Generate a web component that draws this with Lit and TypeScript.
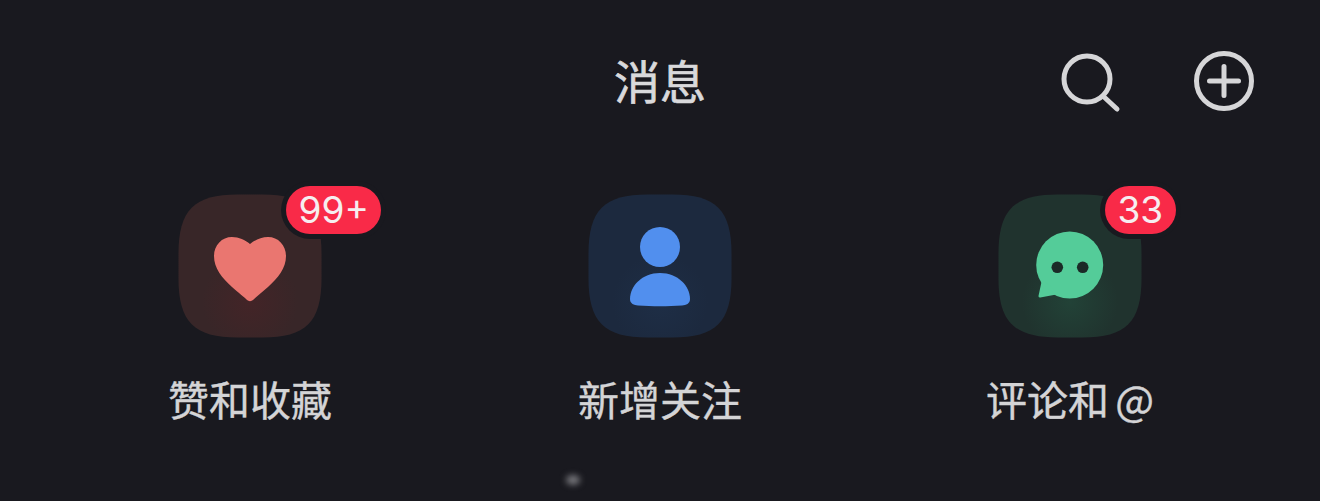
import { LitElement, html, svg, css } from "lit";
import { customElement } from "lit/decorators.js";

const FONT = css`"Noto Sans CJK SC", "Noto Sans", sans-serif`;

@customElement("app-root")
export class AppRoot extends LitElement {
  static styles = css`
    :host {
      display: block;
      position: relative;
      height: 501px;
      overflow: hidden;
      background: #19191f;
      font-family: ${FONT};
    }
    .header {
      display: grid;
      grid-template-columns: 1fr auto 1fr;
      align-items: center;
      height: 164px;
      padding-right: 66px;
      padding-left: 66px;
      box-sizing: border-box;
    }
    .title {
      font-size: 46px;
      font-weight: 400;
      line-height: 60px;
      color: #d9d9db;
      margin-top: -6px;
      -webkit-text-stroke: 0.7px #d9d9db;
    }
    .actions {
      grid-column: 3;
      display: flex;
      justify-content: flex-end;
      gap: 74px;
    }
    .actions svg {
      display: block;
      width: 60px;
      height: 60px;
      overflow: visible;
      fill: none;
      stroke: #d6d6d8;
      stroke-width: 5;
      stroke-linecap: round;
    }
    .grid {
      display: grid;
      grid-template-columns: repeat(3, 410px);
      padding: 30px 45px 0;
    }
    .item {
      display: flex;
      flex-direction: column;
      align-items: center;
    }
    .tile {
      position: relative;
      width: 144px;
      height: 144px;
    }
    .tile > svg {
      display: block;
      width: 144px;
      height: 144px;
    }
    .badge {
      position: absolute;
      top: -8px;
      left: 108px;
      height: 48px;
      padding: 0 12.5px;
      border-radius: 24px;
      background: #f92a48;
      box-shadow: 0 0 0 5px #19191f;
      color: #f6eef0;
      font-family: Inter, "Liberation Sans", sans-serif;
      font-size: 37px;
      line-height: 48px;
      white-space: nowrap;
    }
    .badge.green {
      left: 107px;
    }
    .label {
      margin-top: 35px;
      font-size: 41px;
      line-height: 50px;
      color: #d4d4d6;
      white-space: nowrap;
      word-spacing: -3px;
      -webkit-text-stroke: 0.4px #d4d4d6;
    }
    .smudge {
      position: absolute;
      left: 566px;
      top: 475px;
      width: 14px;
      height: 10px;
      border-radius: 50%;
      background: #77777c;
      filter: blur(3px);
    }
  `;

  private squircle(id: string, base: string, glow: string) {
    return svg`
      <defs>
        <radialGradient id=${id} gradientUnits="userSpaceOnUse" cx="72" cy="108" r="48">
          <stop offset="0" stop-color=${glow}></stop>
          <stop offset="1" stop-color=${base}></stop>
        </radialGradient>
      </defs>
      <path
        fill="url(#${id})"
        d="M60 .5H84C128 .5 143.5 16 143.5 60V84C143.5 128 128 143.5 84 143.5H60C16 143.5 .5 128 .5 84V60C.5 16 16 .5 60 .5Z"
      ></path>
    `;
  }

  render() {
    return html`
      <div class="header">
        <div></div>
        <div class="title">消息</div>
        <div class="actions">
          <svg viewBox="0 0 60 60">
            <circle cx="27" cy="27" r="23"></circle>
            <path d="M43 44L57 57"></path>
          </svg>
          <svg viewBox="0 0 60 60">
            <circle cx="30" cy="29" r="27.5"></circle>
            <path d="M15.5 29H44.5M30 14.5V43.5"></path>
          </svg>
        </div>
      </div>
      <div class="grid">
        <div class="item">
          <div class="tile">
            <svg viewBox="0 0 144 144">
              ${this.squircle("g1", "#382628", "#432427")}
              <path
                fill="#ea7670"
                d="M72 50C67 46 61 43 54 43C44 43 36 51 36 62C36 74 44 84 54 93C61 99 66 103 69 106C70.5 107.5 73.5 107.5 75 106C78 103 83 99 90 93C100 84 108 74 108 62C108 51 100 43 90 43C83 43 77 46 72 50Z"
              ></path>
            </svg>
            <div class="badge">99+</div>
          </div>
          <div class="label">赞和收藏</div>
        </div>
        <div class="item">
          <div class="tile">
            <svg viewBox="0 0 144 144">
              ${this.squircle("g2", "#1c293e", "#1e2e46")}
              <circle cx="72" cy="53" r="20" fill="#518fee"></circle>
              <path
                fill="#518fee"
                d="M72 79C54 79 42 92 42 105C42 110 46 111 50 111.5C64 112.5 80 112.5 94 111.5C98 111 102 110 102 105C102 92 90 79 72 79Z"
              ></path>
            </svg>
          </div>
          <div class="label">新增关注</div>
        </div>
        <div class="item">
          <div class="tile">
            <svg viewBox="0 0 144 144">
              ${this.squircle("g3", "#20332e", "#224237")}
              <circle cx="71.7" cy="71" r="33.5" fill="#54cc99"></circle>
              <path
                fill="#54cc99"
                stroke="#54cc99"
                stroke-width="3"
                stroke-linejoin="round"
                d="M45 88L42 102L58 99Z"
              ></path>
              <circle cx="59.3" cy="73.3" r="5.8" fill="#1b2a27"></circle>
              <circle cx="84.7" cy="73.3" r="5.8" fill="#1b2a27"></circle>
            </svg>
            <div class="badge green">33</div>
          </div>
          <div class="label">评论和 @</div>
        </div>
      </div>
      <div class="smudge"></div>
    `;
  }
}
